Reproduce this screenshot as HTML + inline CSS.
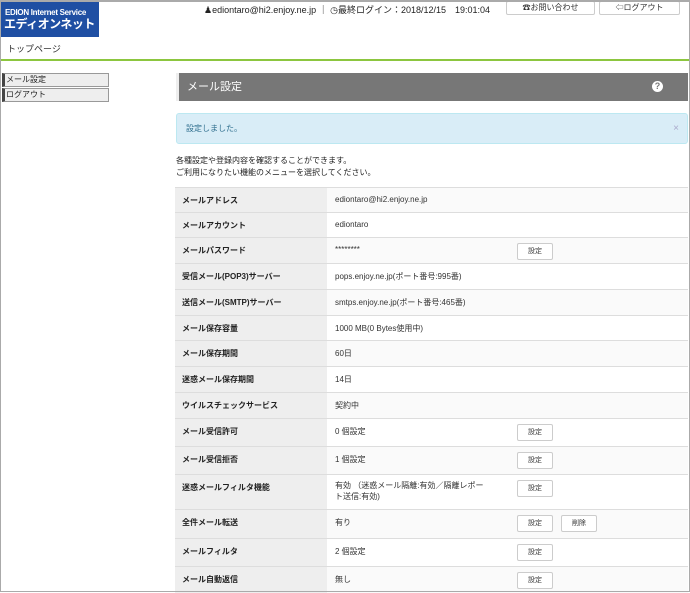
<!DOCTYPE html>
<html><head><meta charset="utf-8"><style>
*{box-sizing:border-box;margin:0;padding:0}
body{width:690px;height:592px;overflow:hidden;background:#fff;font-family:"Liberation Sans","Noto Sans CJK JP",sans-serif;color:#333;position:relative}
.frame{position:absolute;left:0;top:0;width:690px;height:592px;border:1px solid #aaa;border-top:2px solid #aaa}
.abs{position:absolute}
.logo{left:1px;top:2px;width:98px;height:35px;background:#1f4fa3;color:#fff;overflow:hidden}
.topbtn{top:1px;height:14px;border:1px solid #ccc;background:#fff;font-size:8px;text-align:center;line-height:12px;border-radius:2px;white-space:nowrap}
.side{left:2px;width:107px;height:14px;border:1px solid #999;border-left:3px solid #444;background:#eee;font-size:8px;line-height:12px;padding-left:1px;color:#222}
table{position:absolute;left:175px;top:187px;width:513px;border-collapse:collapse;font-size:8px}
td{border-top:1px solid #ddd;vertical-align:top;padding-top:7px}
td.l{width:152px;background:#eee;font-weight:bold;padding-left:7px;color:#222}
td.v{padding-left:8px;position:relative;background:#fff}
tr:nth-child(odd) td.v{background:#fafafa}
.b{position:absolute;top:5px;width:36px;height:17px;border:1px solid #ccc;border-radius:2px;background:#fff;font-size:7px;text-align:center;line-height:15px}
</style></head><body>
<div class="abs logo"><div style="font-size:8px;font-weight:bold;padding:6px 0 0 4px;letter-spacing:-0.3px;white-space:nowrap">EDION Internet Service</div><div style="font-size:12px;font-weight:bold;padding-left:3px;line-height:15px;letter-spacing:-0.5px;white-space:nowrap">エディオンネット</div></div>
<div class="abs" style="left:204px;top:3px;font-size:9px;color:#222;white-space:nowrap">&#9823;ediontaro@hi2.enjoy.ne.jp ｜ &#9719;最終ログイン：2018/12/15　19:01:04</div>
<div class="abs topbtn" style="left:506px;width:89px">☎お問い合わせ</div>
<div class="abs topbtn" style="left:599px;width:81px">⇦ログアウト</div>
<div class="abs" style="left:7px;top:42px;font-size:9px;color:#333">トップページ</div>
<div class="abs" style="left:0;top:59px;width:690px;height:2px;background:#8cc63f"></div>
<div class="abs side" style="top:73px">メール設定</div>
<div class="abs side" style="top:88px">ログアウト</div>
<div class="abs" style="left:176px;top:73px;width:512px;height:28px;background:#777;border-left:3px solid #eee;color:#fff;font-size:11px;line-height:28px;padding-left:8px">メール設定<span style="position:absolute;right:25px;top:8px;width:11px;height:11px;border-radius:50%;background:#fff;color:#777;font-size:9px;line-height:11px;text-align:center;font-weight:bold">?</span></div>
<div class="abs" style="left:176px;top:113px;width:512px;height:31px;background:#d9edf7;border:1px solid #bce8f1;border-radius:3px;font-size:8px;color:#31708f;line-height:29px;padding-left:9px">設定しました。<span style="position:absolute;right:8px;color:#aac;font-size:10px">×</span></div>
<div class="abs" style="left:176px;top:155px;font-size:8px;line-height:12px;color:#222">各種設定や登録内容を確認することができます。<br>ご利用になりたい機能のメニューを選択してください。</div>
<table>
<tr style="height:25px"><td class="l">メールアドレス</td><td class="v">ediontaro@hi2.enjoy.ne.jp</td></tr>
<tr style="height:25px"><td class="l">メールアカウント</td><td class="v">ediontaro</td></tr>
<tr style="height:26px"><td class="l">メールパスワード</td><td class="v">********<div class="b" style="left:190px">設定</div></td></tr>
<tr style="height:26px"><td class="l">受信メール(POP3)サーバー</td><td class="v">pops.enjoy.ne.jp(ポート番号:995番)</td></tr>
<tr style="height:26px"><td class="l">送信メール(SMTP)サーバー</td><td class="v">smtps.enjoy.ne.jp(ポート番号:465番)</td></tr>
<tr style="height:25px"><td class="l">メール保存容量</td><td class="v">1000 MB(0 Bytes使用中)</td></tr>
<tr style="height:26px"><td class="l">メール保存期間</td><td class="v">60日</td></tr>
<tr style="height:26px"><td class="l">迷惑メール保存期間</td><td class="v">14日</td></tr>
<tr style="height:26px"><td class="l">ウイルスチェックサービス</td><td class="v">契約中</td></tr>
<tr style="height:28px"><td class="l">メール受信許可</td><td class="v">0 個設定<div class="b" style="left:190px">設定</div></td></tr>
<tr style="height:28px"><td class="l">メール受信拒否</td><td class="v">1 個設定<div class="b" style="left:190px">設定</div></td></tr>
<tr style="height:35px"><td class="l">迷惑メールフィルタ機能</td><td class="v" style="line-height:11px;padding-top:5px">有効 （迷惑メール隔離:有効／隔離レポー<br>ト送信:有効)<div class="b" style="left:190px">設定</div></td></tr>
<tr style="height:29px"><td class="l">全件メール転送</td><td class="v">有り<div class="b" style="left:190px">設定</div><div class="b" style="left:234px">削除</div></td></tr>
<tr style="height:28px"><td class="l">メールフィルタ</td><td class="v">2 個設定<div class="b" style="left:190px">設定</div></td></tr>
<tr style="height:26px"><td class="l">メール自動返信</td><td class="v">無し<div class="b" style="left:190px">設定</div></td></tr>
</table>
<div class="frame"></div>
</body></html>
